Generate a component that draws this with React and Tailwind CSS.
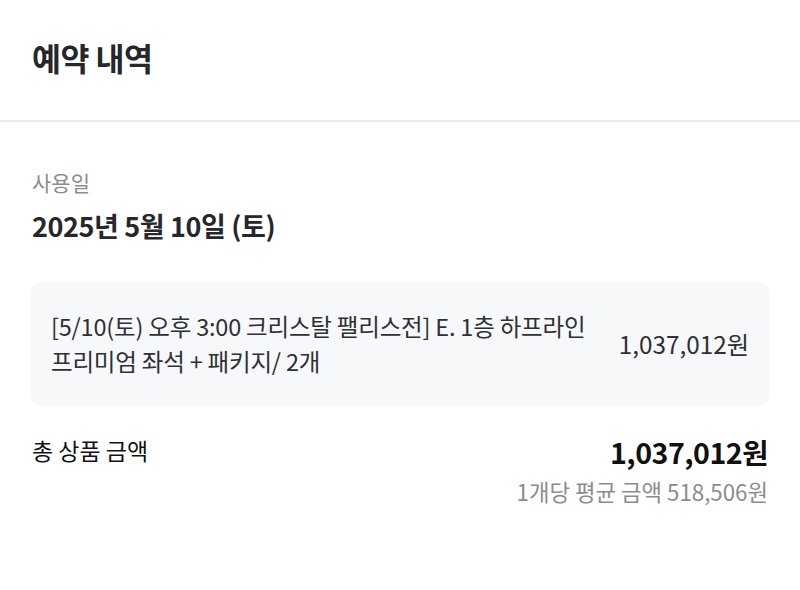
const FONT = { fontFamily: '"Noto Sans CJK KR", "Noto Sans", sans-serif' }

export default function App() {
  return (
    <div className="w-[800px] h-[590px] bg-white text-[#1b1d21]" style={FONT}>
      <div className="px-8 pt-[36px] pb-[42px]">
        <h1 className="text-[31.5px] font-bold leading-[42px] tracking-[-0.5px] text-[#25272b]">예약 내역</h1>
      </div>
      <div className="h-[2px] bg-[#ececee]" />

      <div className="px-8 pt-[47px]">
        <div className="text-[21px] leading-[26px] text-[#8a8c91]">사용일</div>
        <div className="mt-[13px] text-[27px] font-bold leading-[36px] tracking-[-0.4px] text-[#25272b]">
          2025년 5월 10일 (토)
        </div>

        <div className="mt-[38px] -mx-[1px] rounded-[10px] bg-[#f7f8fa] px-5 py-[27px] flex items-center justify-between">
          <div className="text-[23.5px] leading-[35px] text-[#2e3034] tracking-[-0.2px]">
            <div>[5/10(토) 오후 3:00 크리스탈 팰리스전] E. 1층 하프라인</div>
            <div>프리미엄 좌석 + 패키지/ 2개</div>
          </div>
          <div className="text-[24.3px] leading-[30px] text-[#2e3034]">1,037,012원</div>
        </div>

        <div className="mt-[27px] flex justify-between items-start">
          <div className="text-[23px] leading-[32px] text-[#111] pt-[1px]">총 상품 금액</div>
          <div className="text-right">
            <div className="text-[28.6px] font-bold leading-[38px] tracking-[-0.5px] text-[#111]">1,037,012원</div>
            <div className="mt-[6px] text-[22.3px] leading-[28px] text-[#8a8c91]">1개당 평균 금액 518,506원</div>
          </div>
        </div>
      </div>
    </div>
  )
}
